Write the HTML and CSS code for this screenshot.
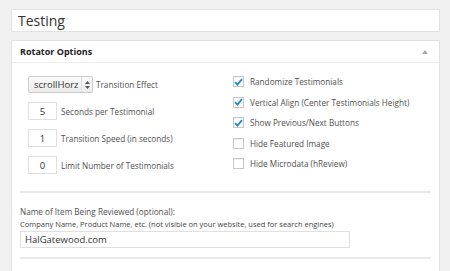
FILE: index.html
```html
<!DOCTYPE html>
<html lang="en">
<head>
    <meta charset="UTF-8">
    <title>Testing - Rotator Options</title>
    <link rel="stylesheet" href="styles.css">
</head>
<body>
    <main class="editor">
        <div class="title-wrap">
            <input type="text" class="title-input" value="Testing">
        </div>

        <section class="postbox">
            <header class="postbox-header">
                <h2 class="postbox-title">Rotator Options</h2>
                <span class="toggle-arrow" aria-hidden="true"></span>
            </header>

            <div class="postbox-inside">
                <div class="options-grid">
                    <div class="options-left">
                        <div class="option-row">
                            <div class="fake-select">
                                <span class="fake-select-value">scrollHorz</span>
                                <span class="fake-select-arrows">
                                    <svg width="5" height="8" viewBox="0 0 5 8"><path d="M2.5 0 L5 3 L0 3 Z M2.5 8 L5 5 L0 5 Z" fill="#555"/></svg>
                                </span>
                            </div>
                            <label class="option-label">Transition Effect</label>
                        </div>
                        <div class="option-row">
                            <input type="text" class="num-input" value="5">
                            <label class="option-label">Seconds per Testimonial</label>
                        </div>
                        <div class="option-row">
                            <input type="text" class="num-input" value="1">
                            <label class="option-label">Transition Speed (in seconds)</label>
                        </div>
                        <div class="option-row">
                            <input type="text" class="num-input" value="0">
                            <label class="option-label">Limit Number of Testimonials</label>
                        </div>
                    </div>

                    <div class="options-right">
                        <div class="check-row">
                            <span class="checkbox is-checked"><svg width="9" height="8" viewBox="0 0 9 8"><path d="M1 4.2 L3.4 6.6 L8 1.2" fill="none" stroke="#1e8cbe" stroke-width="1.8"/></svg></span>
                            <span class="check-label">Randomize Testimonials</span>
                        </div>
                        <div class="check-row">
                            <span class="checkbox is-checked"><svg width="9" height="8" viewBox="0 0 9 8"><path d="M1 4.2 L3.4 6.6 L8 1.2" fill="none" stroke="#1e8cbe" stroke-width="1.8"/></svg></span>
                            <span class="check-label">Vertical Align (Center Testimonials Height)</span>
                        </div>
                        <div class="check-row">
                            <span class="checkbox is-checked"><svg width="9" height="8" viewBox="0 0 9 8"><path d="M1 4.2 L3.4 6.6 L8 1.2" fill="none" stroke="#1e8cbe" stroke-width="1.8"/></svg></span>
                            <span class="check-label">Show Previous/Next Buttons</span>
                        </div>
                        <div class="check-row">
                            <span class="checkbox"></span>
                            <span class="check-label">Hide Featured Image</span>
                        </div>
                        <div class="check-row">
                            <span class="checkbox"></span>
                            <span class="check-label">Hide Microdata (hReview)</span>
                        </div>
                    </div>
                </div>

                <hr class="divider">

                <div class="review-field">
                    <p class="field-label">Name of Item Being Reviewed (optional):</p>
                    <p class="field-help">Company Name, Product Name, etc. (not visible on your website, used for search engines)</p>
                    <input type="text" class="text-input" value="HalGatewood.com">
                </div>

                <hr class="divider">
            </div>
        </section>
    </main>
</body>
</html>
```

FILE: styles.css
```css
body {
    margin: 0;
    background: #f1f1f1;
    font-family: 'Open Sans', sans-serif;
    color: #444;
    overflow: hidden;
}

.editor {
    padding: 9px 10px 0 11px;
    width: 429px;
}

.title-input {
    box-sizing: border-box;
    display: block;
    width: 100%;
    height: 23px;
    margin: 0;
    padding: 0 6px;
    border: 1px solid #e2e2e2;
    background: #fff;
    font-family: 'Open Sans', sans-serif;
    font-size: 14px;
    color: #333;
    outline: none;
}

.postbox {
    margin-top: 8px;
    background: #fff;
    border: 1px solid #e2e2e2;
    height: 240px;
}

.postbox-header {
    display: flex;
    align-items: center;
    justify-content: space-between;
    height: 21px;
    padding: 0 11px 0 8px;
    border-bottom: 1px solid #eee;
}

.postbox-title {
    margin: 0;
    font-size: 9px;
    font-weight: 700;
    color: #222;
}

.toggle-arrow {
    width: 0;
    height: 0;
    border-left: 3px solid transparent;
    border-right: 3px solid transparent;
    border-bottom: 4px solid #aaa;
}

.postbox-inside {
    padding: 0 8px;
}

.options-grid {
    display: flex;
    padding-top: 13px;
}

.options-left {
    width: 205px;
    padding-left: 8px;
    display: flex;
    flex-direction: column;
    gap: 9px;
}

.option-row {
    display: flex;
    align-items: center;
    gap: 3px;
}

.fake-select {
    box-sizing: border-box;
    display: flex;
    align-items: center;
    width: 65px;
    height: 17px;
    border: 1px solid #ccc;
    border-radius: 2px;
    background: linear-gradient(#fafafa, #ececec);
}

.fake-select-value {
    flex: 1;
    padding-left: 5px;
    font-size: 9.5px;
    color: #333;
}

.fake-select-arrows {
    display: flex;
    align-items: center;
    justify-content: center;
    width: 10px;
    height: 100%;
    border-left: 1px solid #ddd;
}

.num-input {
    box-sizing: border-box;
    width: 29px;
    height: 18px;
    margin: 0;
    padding: 0;
    border: 1px solid #e0e0e0;
    text-align: center;
    font-family: 'Open Sans', sans-serif;
    font-size: 9.5px;
    color: #333;
    outline: none;
}

.num-input + .option-label {
    margin-left: 1px;
}

.option-label {
    font-size: 8.2px;
    color: #505050;
}

.options-right {
    display: flex;
    flex-direction: column;
    gap: 9px;
    padding-top: 0;
}

.check-row {
    display: flex;
    align-items: center;
    gap: 6px;
    height: 11.5px;
}

.checkbox {
    box-sizing: border-box;
    display: flex;
    align-items: center;
    justify-content: center;
    width: 11px;
    height: 11px;
    border: 1px solid #c8c8c8;
    background: #fff;
    box-shadow: inset 0 1px 1px rgba(0, 0, 0, 0.06);
}

.check-label {
    font-size: 8.2px;
    color: #505050;
}

.divider {
    margin: 17px 0 0;
    border: none;
    border-top: 2px solid #e9e9e9;
}

.review-field {
    padding-top: 12px;
    padding-bottom: 9px;
}

.field-label {
    margin: 0;
    font-size: 8.2px;
    line-height: 13px;
    color: #505050;
}

.field-help {
    margin: 0;
    font-size: 7.5px;
    line-height: 12px;
    color: #444;
}

.text-input {
    box-sizing: border-box;
    display: block;
    width: 330px;
    height: 17px;
    margin: 1px 0 0;
    padding: 0 4px;
    border: 1px solid #e0e0e0;
    font-family: 'Open Sans', sans-serif;
    font-size: 9.5px;
    color: #333;
    outline: none;
}

.review-field + .divider {
    margin-top: 0;
}
```
